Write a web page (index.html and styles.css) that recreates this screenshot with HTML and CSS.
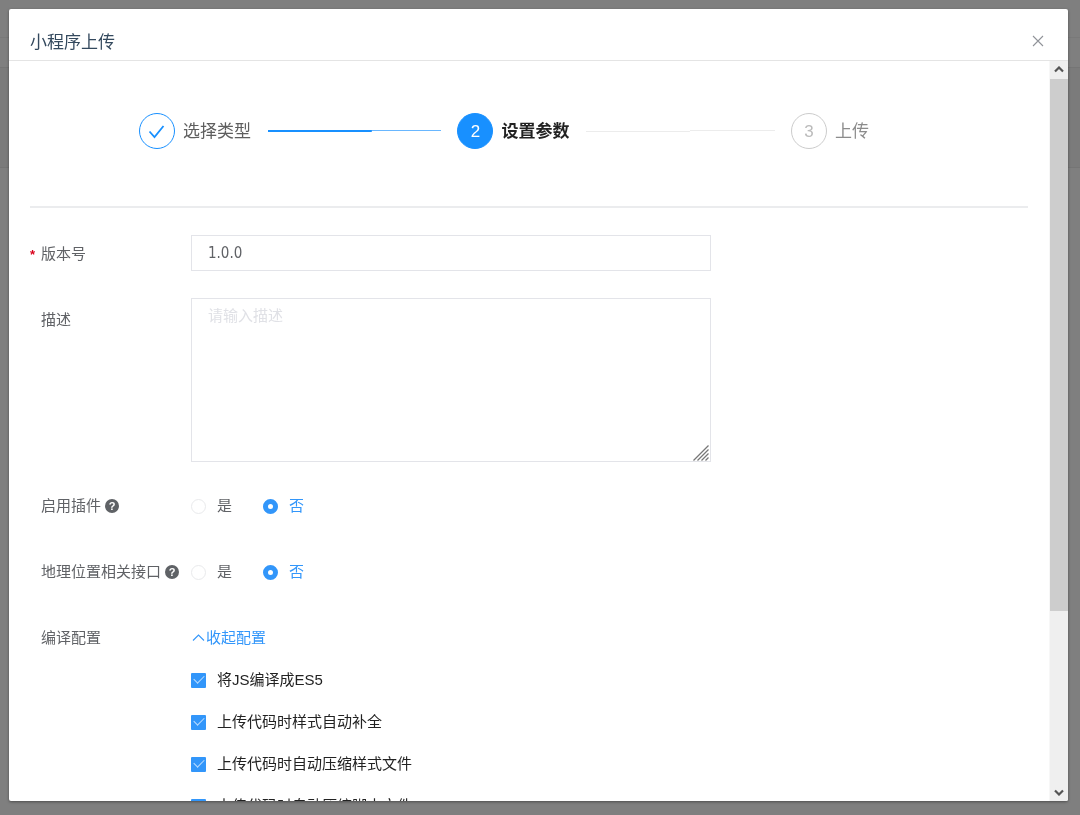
FILE: index.html
```html
<!DOCTYPE html>
<html lang="zh-CN">
<head>
<meta charset="utf-8">
<title>小程序上传</title>
<link rel="stylesheet" href="styles.css">
</head>
<body>
<div class="page">
  <div class="page-top"></div>
  <div class="page-tabs"></div>
  <div class="page-band"></div>
</div>
<div class="overlay">
  <section class="dialog" role="dialog" aria-labelledby="dialog-title">
    <header class="dialog-header">
      <h1 class="dialog-title" id="dialog-title">小程序上传</h1>
      <button class="close" type="button" aria-label="关闭">
        <svg width="12" height="12" viewBox="0 0 12 12"><path d="M1 1l10 10M11 1L1 11" fill="none" stroke="currentColor" stroke-width="1.100"/></svg>
      </button>
    </header>
    <div class="dialog-body">
      <div class="content">
        <ol class="steps">
          <li class="step step-done">
            <span class="step-icon"><svg width="18" height="16" viewBox="0 0 18 16"><path d="M1.500 7.500l5 5.500L15.500 2" fill="none" stroke="currentColor" stroke-width="1.800"/></svg></span>
            <span class="step-name">选择类型</span>
            <span class="step-line"></span>
          </li>
          <li class="step step-current">
            <span class="step-icon">2</span>
            <span class="step-name">设置参数</span>
            <span class="step-line"></span>
          </li>
          <li class="step step-wait">
            <span class="step-icon">3</span>
            <span class="step-name">上传</span>
          </li>
        </ol>
        <form class="form">
          <div class="row">
            <label class="label required" for="version">版本号</label>
            <input class="input" id="version" type="text" value="1.0.0">
          </div>
          <div class="row row-area">
            <label class="label" for="desc">描述</label>
            <div class="area-wrap">
              <textarea class="area" id="desc" placeholder="请输入描述"></textarea>
              <svg class="grip" width="16" height="16" viewBox="0 0 16 16"><path d="M0.500 15.500l15-15M4.500 15.500l11-11M8.500 15.500l7-7M12.500 15.500l3-3" fill="none" stroke="#777" stroke-width="1.300"/></svg>
            </div>
          </div>
          <div class="row row-choice" role="radiogroup" aria-labelledby="plugin-label">
            <span class="label" id="plugin-label">启用插件<span class="help">?</span></span>
            <div class="radios">
              <label class="radio"><input type="radio" name="plugin"><span>是</span></label>
              <label class="radio"><input type="radio" name="plugin" checked><span>否</span></label>
            </div>
          </div>
          <div class="row row-choice" role="radiogroup" aria-labelledby="geo-label">
            <span class="label" id="geo-label">地理位置相关接口<span class="help">?</span></span>
            <div class="radios">
              <label class="radio"><input type="radio" name="geo"><span>是</span></label>
              <label class="radio"><input type="radio" name="geo" checked><span>否</span></label>
            </div>
          </div>
          <div class="row">
            <span class="label label-choice">编译配置</span>
            <div class="config">
              <button class="toggle" type="button"><svg width="15" height="15" viewBox="0 0 15 15"><path d="M2 9.500L7.500 4l5.500 5.500" fill="none" stroke="currentColor" stroke-width="1.100"/></svg>收起配置</button>
              <label class="check"><input type="checkbox" checked><span>将JS编译成ES5</span></label>
              <label class="check"><input type="checkbox" checked><span>上传代码时样式自动补全</span></label>
              <label class="check"><input type="checkbox" checked><span>上传代码时自动压缩样式文件</span></label>
              <label class="check"><input type="checkbox" checked><span>上传代码时自动压缩脚本文件</span></label>
            </div>
          </div>
        </form>
      </div>
      <div class="scrollbar" aria-hidden="true">
        <span class="scroll-arrow"><svg width="10" height="8" viewBox="0 0 10 8"><path d="M1 5.500l4-4 4 4" fill="none" stroke="#555" stroke-width="2.200"/></svg></span>
        <div class="scroll-track"><div class="scroll-thumb"></div></div>
        <span class="scroll-arrow"><svg width="10" height="8" viewBox="0 0 10 8"><path d="M1 2.500l4 4 4-4" fill="none" stroke="#555" stroke-width="2.200"/></svg></span>
      </div>
    </div>
  </section>
</div>
</body>
</html>
```
FILE: styles.css
```css
* { box-sizing: border-box; }

body {
  margin: 0;
  overflow: hidden;
  background: #7f7f7f;
  color: #606266;
  font: 15px/20px "Liberation Sans", "Noto Sans CJK SC", sans-serif;
}

button, input, textarea { font: inherit; }

.page-top { height: 38px; border-bottom: 1px solid #797979; }
.page-tabs { height: 30px; border-bottom: 1px solid #757575; }
.page-band { height: 100px; background: #7b7b7b; border-bottom: 1px solid #757575; }

.overlay {
  position: fixed;
  inset: 0;
  display: flex;
  padding: 9px 12px 14px 9px;
}

.dialog {
  flex: 1;
  min-width: 0;
  display: flex;
  flex-direction: column;
  background: #fff;
  border-radius: 2px;
  box-shadow: 0 1px 3px rgba(0, 0, 0, .4);
  overflow: hidden;
}

.dialog-header {
  display: flex;
  align-items: center;
  justify-content: space-between;
  padding: 21px 22px 5px 21px;
  border-bottom: 1px solid #e4e4e4;
}
.dialog-title { margin: 0; font-size: 17px; line-height: 25px; font-weight: 400; color: #34495e; }
.close {
  display: flex;
  margin-bottom: 4px;
  padding: 2px;
  border: 0;
  background: none;
  color: #909399;
}

.dialog-body { flex: 1; min-height: 0; display: flex; }
.content {
  flex: 1;
  min-width: 0;
  padding: 52px 21px 0;
  overflow-y: auto;
  scrollbar-width: none;
}

.steps {
  display: flex;
  gap: 16px;
  margin: 0;
  padding: 0 159px 57px 109px;
  border-bottom: 2px solid #ebecee;
  list-style: none;
  font-size: 17px;
}
.step { display: flex; align-items: center; gap: 8px; }
.step-done { flex: 318 0 0; }
.step-current { flex: 334 0 0; }
.step-wait { flex: none; }
.step-icon {
  flex: none;
  width: 36px;
  height: 36px;
  display: flex;
  align-items: center;
  justify-content: center;
  padding-top: 2px;
  border: 1px solid #1890ff;
  border-radius: 50%;
  color: #1890ff;
}
.step-name { padding-top: 2px; color: #5e5e5e; white-space: nowrap; }
.step-line { flex: 1; height: 2px; margin-left: 9px; }
.step-done .step-line {
  background:
    linear-gradient(#1890ff, #1890ff) 0 0 / 60% 2px no-repeat,
    linear-gradient(#69b7ff, #69b7ff) 0 0 / 100% 1px no-repeat;
}
.step-current .step-icon { background: #1890ff; color: #fff; }
.step-current .step-name { color: #222; font-weight: 700; }
.step-current .step-line {
  background:
    linear-gradient(#ececec, #ececec) 0 100% / 55% 1px no-repeat,
    linear-gradient(#ececec, #ececec) 100% 0 / 45% 1px no-repeat;
}
.step-wait .step-icon { border-color: #ccc; color: #bbb; }
.step-wait .step-name { color: #8c8c8c; }

.form { padding-top: 27px; }
.row { display: grid; grid-template-columns: 161px minmax(0, 520px); }
.label { padding-left: 11px; line-height: 38px; white-space: nowrap; }
.required { height: 36px; padding-left: 0; }
.required::before {
  content: "*";
  display: inline-block;
  width: 11px;
  color: #d9001b;
  font-weight: 700;
  font-size: 13px;
}

.input, .area {
  display: block;
  width: 100%;
  border: 1px solid #e3e4e9;
  border-radius: 0;
  background: #fff;
  color: #606266;
  outline: 0;
}
.input { height: 36px; padding: 0 16px; font-family: "DejaVu Sans Condensed", "Noto Sans", sans-serif; }
.row-area { margin: 27px 0 25px; }
.row-area .label { line-height: 44px; }
.area-wrap { position: relative; }
.area { height: 164px; padding: 7px 16px; resize: none; }
.area::placeholder { color: #e0e1e6; opacity: 1; }
.grip { position: absolute; right: 2px; bottom: 1px; }

.row-choice { align-items: center; height: 38px; margin-bottom: 28px; }
.help {
  display: inline-flex;
  align-items: center;
  justify-content: center;
  width: 14px;
  height: 14px;
  margin-left: 4px;
  border-radius: 50%;
  background: #5f6266;
  color: #fff;
  font-size: 11px;
  line-height: 14px;
  font-weight: 700;
  vertical-align: 1px;
}

.radios { display: flex; gap: 31px; }
.radio, .check { display: flex; align-items: center; gap: 11px; }
.radio input, .check input {
  flex: none;
  appearance: none;
  width: 15px;
  height: 15px;
  margin: 0;
}
.radio input { border: 1px solid #e9eaec; border-radius: 50%; background: #fff; }
.radio input:checked { border: 5px solid #3296fa; }
.radio input:checked + span { color: #3296fa; }

.config { display: flex; flex-direction: column; }
.toggle {
  align-self: flex-start;
  display: flex;
  align-items: center;
  height: 38px;
  margin-bottom: 2px;
  padding: 0;
  border: 0;
  background: none;
  color: #3296fa;
}
.check { height: 42px; color: #222; }
.check input { display: grid; place-items: center; border-radius: 1px; background: #3296fa; }
.check input::before {
  content: "";
  width: 9px;
  height: 5px;
  margin-bottom: 4px;
  border: solid #b9dcff;
  border-width: 0 0 1px 1px;
  transform: rotate(-45deg);
}

.scrollbar {
  flex: none;
  width: 19px;
  display: flex;
  flex-direction: column;
  background: #efefef;
  border-left: 1px solid #f7f7f7;
}
.scroll-arrow { height: 18px; display: flex; align-items: center; justify-content: center; }
.scroll-track { flex: 1; }
.scroll-thumb { height: 75.6%; background: #cdcdcd; }
```
